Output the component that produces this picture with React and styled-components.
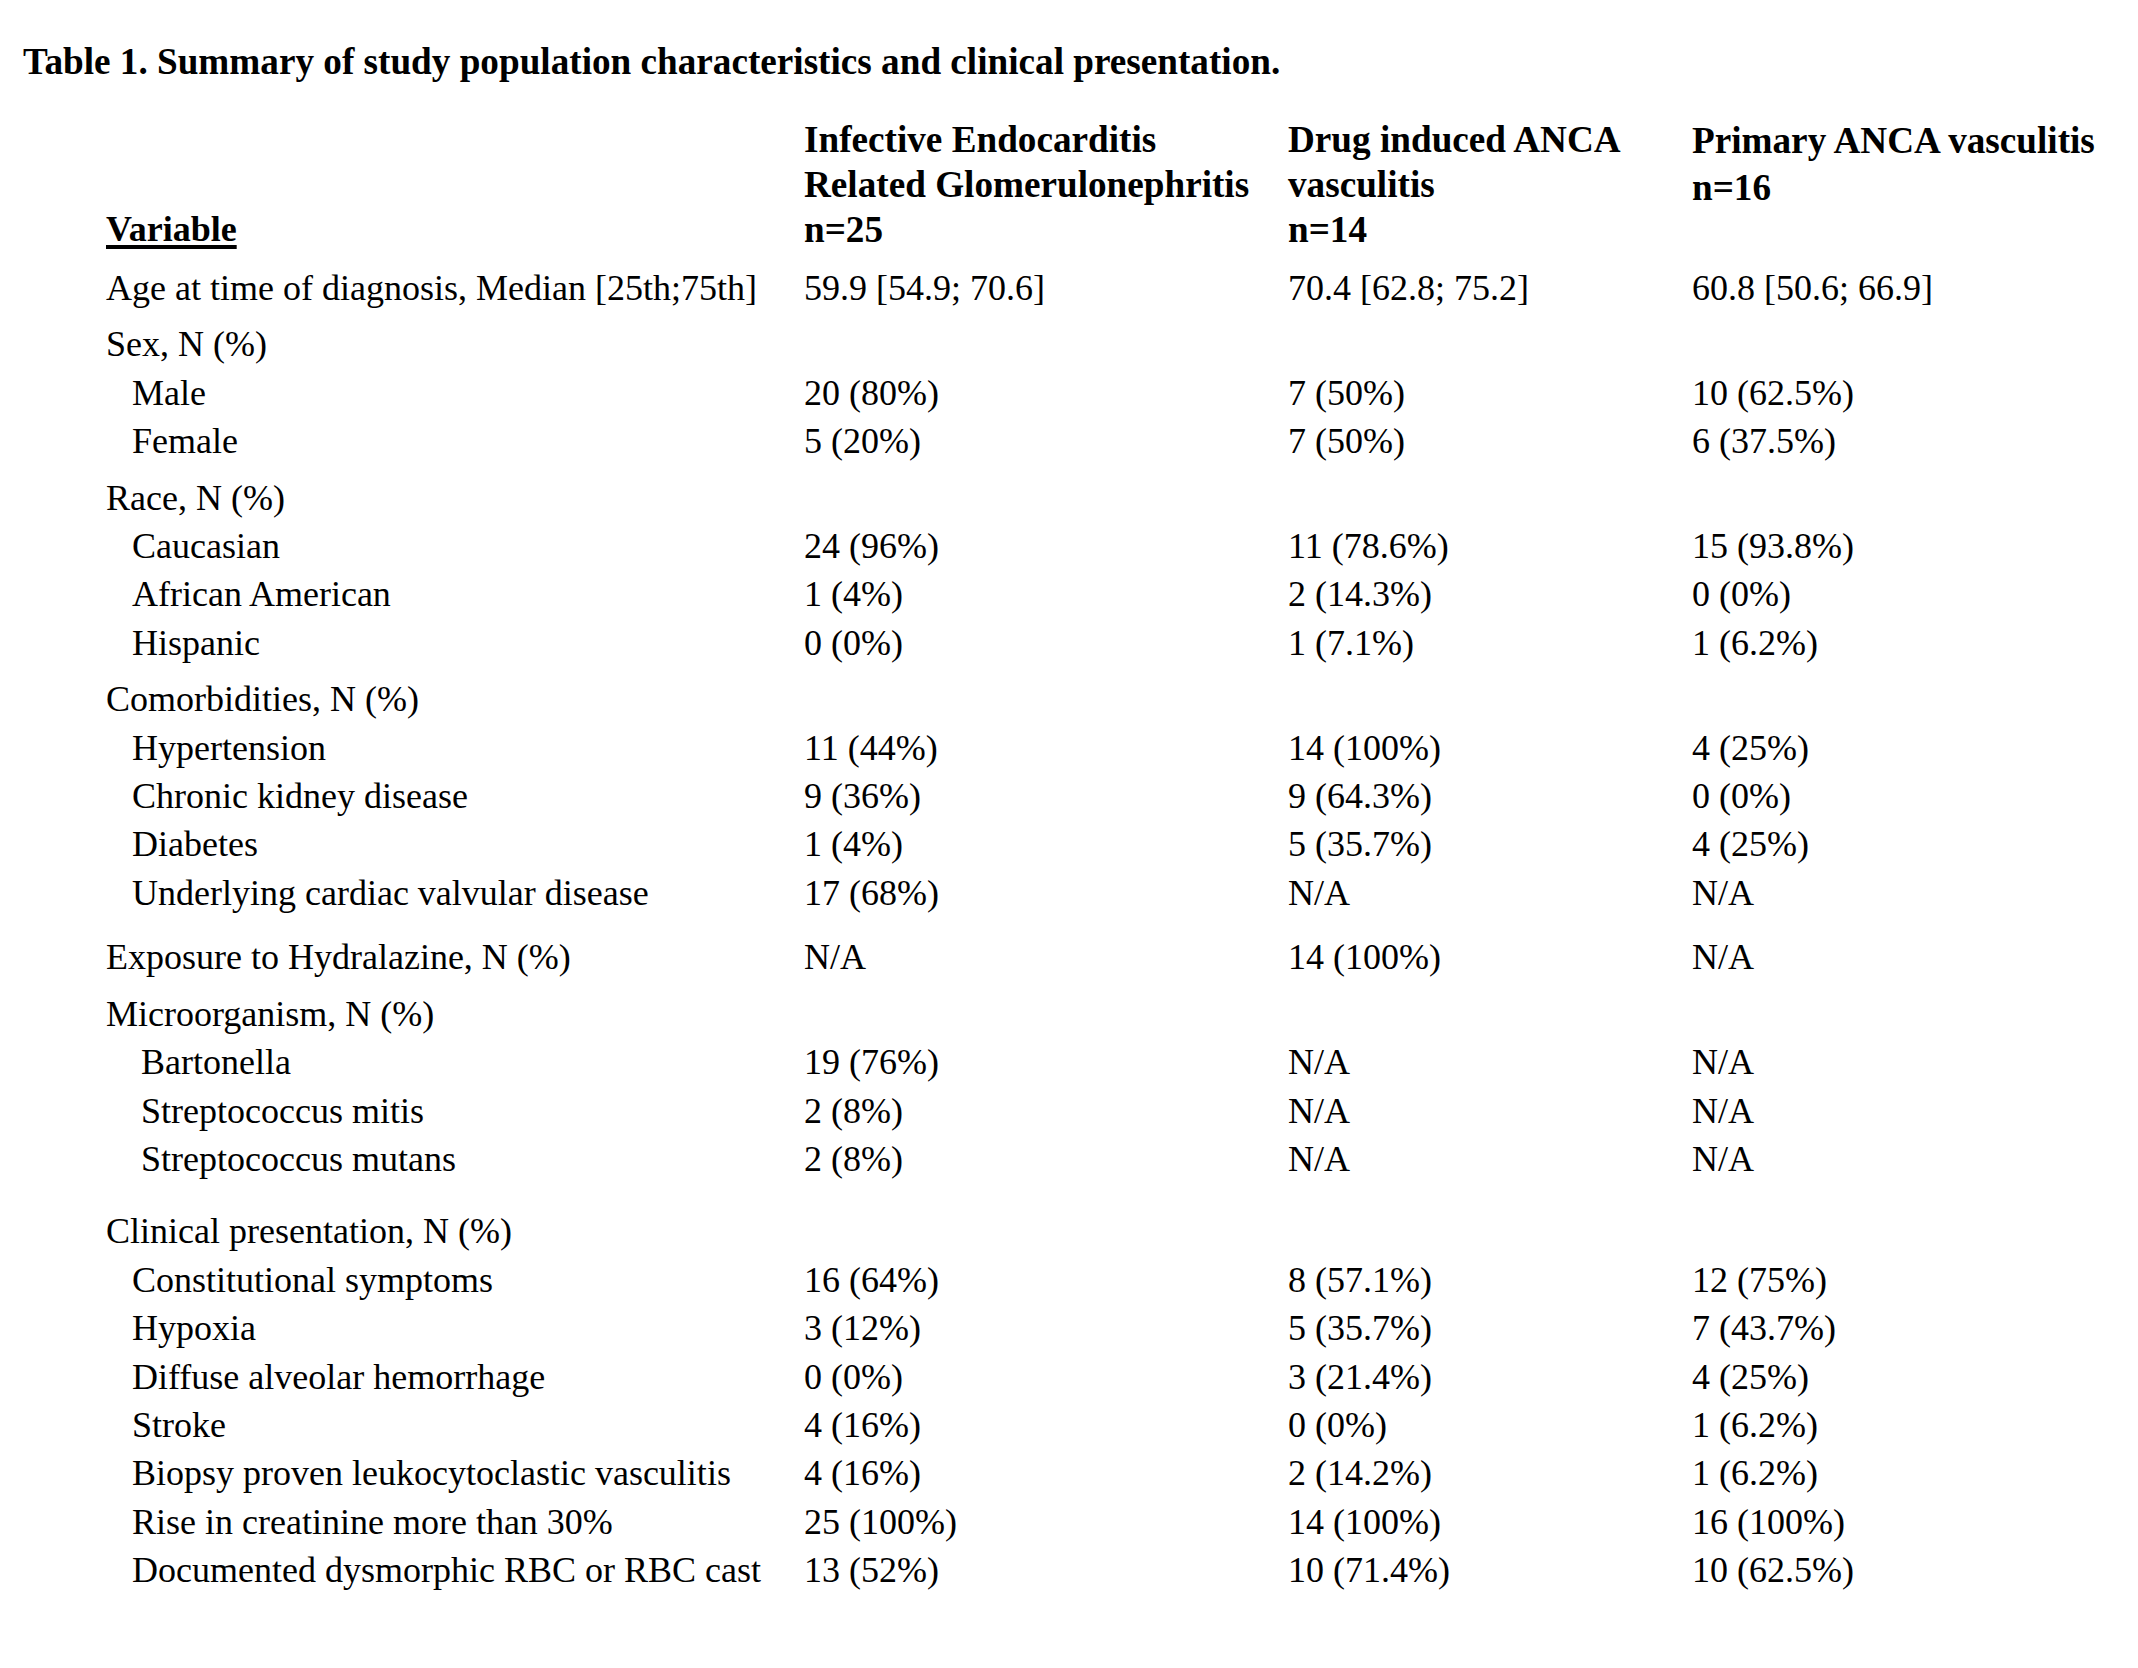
import styled, { createGlobalStyle } from 'styled-components';

const GlobalStyle = createGlobalStyle`
  body {
    margin: 0;
    background: #fff;
    color: #000;
    font-family: "Liberation Serif", "Times New Roman", serif;
  }
`;

const rows = [
  { label: 'Age at time of diagnosis, Median [25th;75th]', values: ['59.9 [54.9; 70.6]', '70.4 [62.8; 75.2]', '60.8 [50.6; 66.9]'], gap: 12 },
  { label: 'Sex, N (%)', gap: 8 },
  { label: 'Male', values: ['20 (80%)', '7 (50%)', '10 (62.5%)'], indent: 26 },
  { label: 'Female', values: ['5 (20%)', '7 (50%)', '6 (37.5%)'], indent: 26 },
  { label: 'Race, N (%)', gap: 8 },
  { label: 'Caucasian', values: ['24 (96%)', '11 (78.6%)', '15 (93.8%)'], indent: 26 },
  { label: 'African American', values: ['1 (4%)', '2 (14.3%)', '0 (0%)'], indent: 26 },
  { label: 'Hispanic', values: ['0 (0%)', '1 (7.1%)', '1 (6.2%)'], indent: 26 },
  { label: 'Comorbidities, N (%)', gap: 8 },
  { label: 'Hypertension', values: ['11 (44%)', '14 (100%)', '4 (25%)'], indent: 26 },
  { label: 'Chronic kidney disease', values: ['9 (36%)', '9 (64.3%)', '0 (0%)'], indent: 26 },
  { label: 'Diabetes', values: ['1 (4%)', '5 (35.7%)', '4 (25%)'], indent: 26 },
  { label: 'Underlying cardiac valvular disease', values: ['17 (68%)', 'N/A', 'N/A'], indent: 26 },
  { label: 'Exposure to Hydralazine, N (%)', values: ['N/A', '14 (100%)', 'N/A'], gap: 16 },
  { label: 'Microorganism, N (%)', gap: 8 },
  { label: 'Bartonella', values: ['19 (76%)', 'N/A', 'N/A'], indent: 35 },
  { label: 'Streptococcus mitis', values: ['2 (8%)', 'N/A', 'N/A'], indent: 35 },
  { label: 'Streptococcus mutans', values: ['2 (8%)', 'N/A', 'N/A'], indent: 35 },
  { label: 'Clinical presentation, N (%)', gap: 24 },
  { label: 'Constitutional symptoms', values: ['16 (64%)', '8 (57.1%)', '12 (75%)'], indent: 26 },
  { label: 'Hypoxia', values: ['3 (12%)', '5 (35.7%)', '7 (43.7%)'], indent: 26 },
  { label: 'Diffuse alveolar hemorrhage', values: ['0 (0%)', '3 (21.4%)', '4 (25%)'], indent: 26 },
  { label: 'Stroke', values: ['4 (16%)', '0 (0%)', '1 (6.2%)'], indent: 26 },
  { label: 'Biopsy proven leukocytoclastic vasculitis', values: ['4 (16%)', '2 (14.2%)', '1 (6.2%)'], indent: 26 },
  { label: 'Rise in creatinine more than 30%', values: ['25 (100%)', '14 (100%)', '16 (100%)'], indent: 26 },
  { label: 'Documented dysmorphic RBC or RBC cast', values: ['13 (52%)', '10 (71.4%)', '10 (62.5%)'], indent: 26 },
];

const Page = styled.div`
  padding: 38px 0 60px 0;
  font-size: 36px;
`;

const Title = styled.h1`
  margin: 0;
  padding-left: 23px;
  font-size: 37.2px;
  line-height: 48px;
  font-weight: bold;
  white-space: nowrap;
`;

const Table = styled.div`
  margin-left: 106px;
  margin-top: 31px;
`;

const Head = styled.div`
  display: grid;
  grid-template-columns: 698px 484px 404px 1fr;
  font-weight: bold;
  font-size: 37.2px;
`;

const HeadCell = styled.div`
  display: flex;
  flex-direction: column;
  justify-content: ${(p) => (p.$bottom ? 'flex-end' : 'flex-start')};
  line-height: ${(p) => p.$lh || 45}px;
  white-space: nowrap;
`;

const Underlined = styled.span`
  text-decoration: underline;
  text-decoration-thickness: 4px;
  text-underline-offset: 4px;
  font-size: 36px;
`;

const Row = styled.div`
  display: grid;
  grid-template-columns: 698px 484px 404px 1fr;
  line-height: 48.4px;
  margin-top: ${(p) => p.$gap || 0}px;
  white-space: nowrap;
`;

const Label = styled.div`
  padding-left: ${(p) => p.$indent || 0}px;
`;

const Cell = styled.div``;

export default function App() {
  return (
    <>
      <GlobalStyle />
      <Page>
        <Title>Table 1. Summary of study population characteristics and clinical presentation.</Title>
        <Table>
          <Head>
            <HeadCell $bottom>
              <Underlined>Variable</Underlined>
            </HeadCell>
            <HeadCell>
              <span>Infective Endocarditis</span>
              <span>Related Glomerulonephritis</span>
              <span>n=25</span>
            </HeadCell>
            <HeadCell>
              <span>Drug induced ANCA</span>
              <span>vasculitis</span>
              <span>n=14</span>
            </HeadCell>
            <HeadCell $lh={47}>
              <span>Primary ANCA vasculitis</span>
              <span>n=16</span>
            </HeadCell>
          </Head>
          {rows.map((r) => (
            <Row key={r.label} $gap={r.gap}>
              <Label $indent={r.indent}>{r.label}</Label>
              {(r.values || ['', '', '']).map((v, i) => (
                <Cell key={i}>{v}</Cell>
              ))}
            </Row>
          ))}
        </Table>
      </Page>
    </>
  );
}
